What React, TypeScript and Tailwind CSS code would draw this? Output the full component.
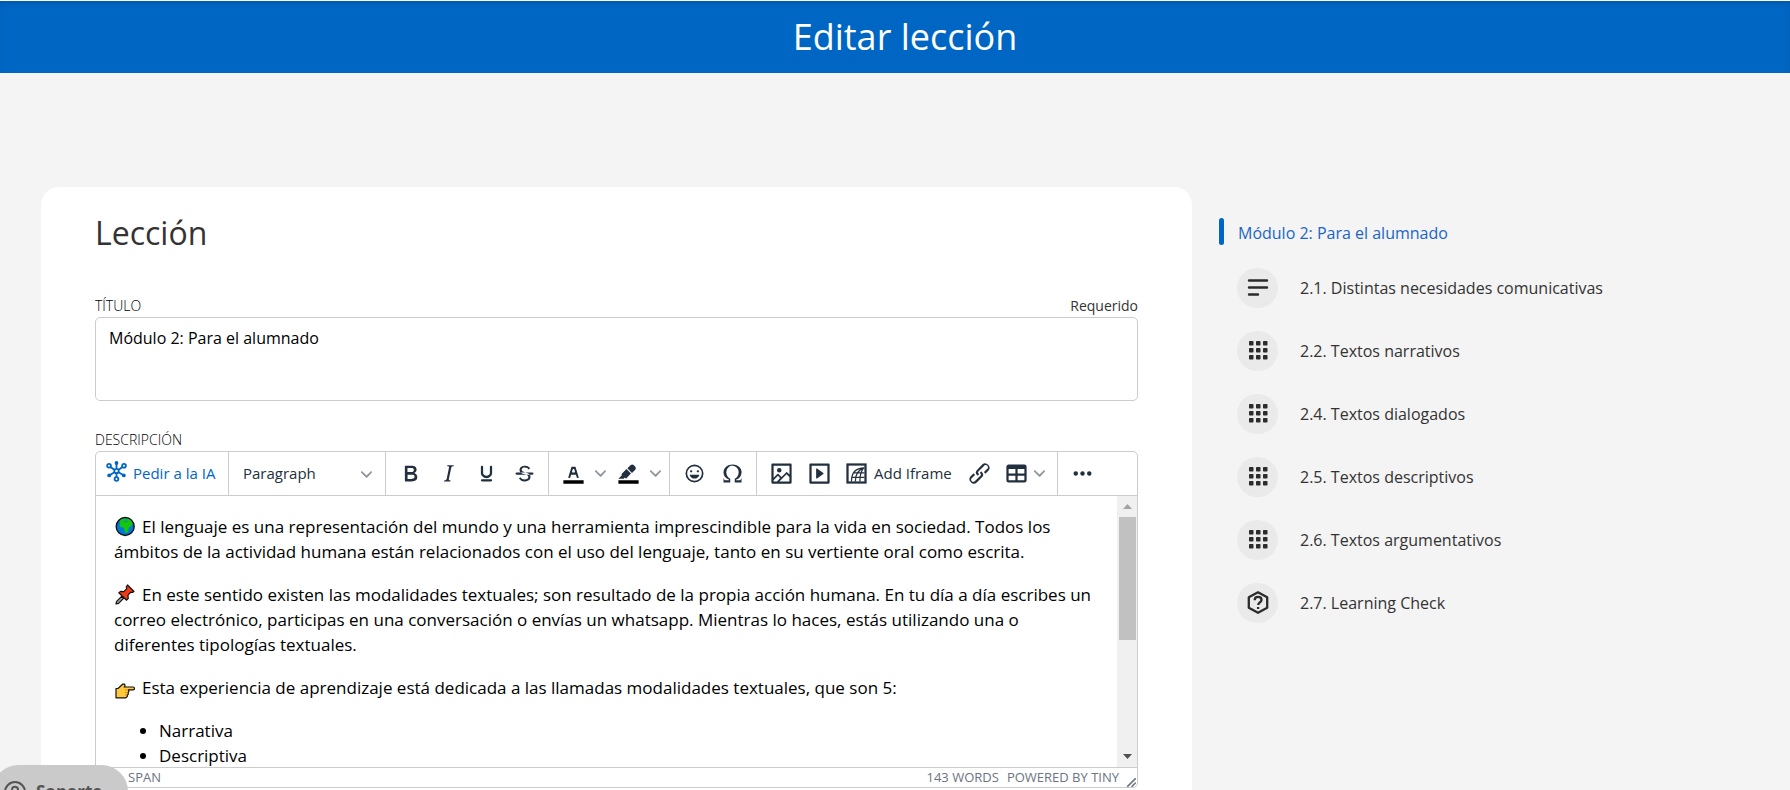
import { ReactNode, useState } from 'react'

const ICONS = {
  bold: 'M7.8 19c-.3 0-.5 0-.6-.2l-.2-.5V5.7c0-.2 0-.4.2-.5l.6-.2h5c1.5 0 2.7.3 3.5 1 .7.6 1.1 1.4 1.1 2.5a3 3 0 01-.6 1.9c-.4.6-1 1-1.6 1.2.4.1.9.3 1.3.6s.8.7 1 1.2c.4.4.5 1 .5 1.6 0 1.3-.4 2.3-1.3 3-.8.7-2.1 1-3.8 1H7.8zm5-8.3c.6 0 1.2-.1 1.6-.5.4-.3.6-.7.6-1.3 0-1.1-.8-1.7-2.3-1.7H9.3v3.5h3.4zm.5 6c.7 0 1.3-.1 1.7-.4.4-.4.6-.9.6-1.5s-.2-1-.7-1.4c-.4-.3-1-.4-2-.4H9.4v3.8h4z',
  italic: 'M16.7 4.7l-.1.9h-.3c-.6 0-1 0-1.4.3-.3.3-.4.6-.5 1.1l-2.1 9.8v.6c0 .5.4.8 1.4.8h.2l-.2.8H8l.2-.8h.2c1.1 0 1.8-.5 2-1.5l2-9.8.1-.5c0-.6-.4-.8-1.4-.8h-.3l.2-.9h5.8z',
  underline: 'M16 5c.6 0 1 .4 1 1v5.5a4 4 0 01-.4 1.8l-1 1.4a5.3 5.3 0 01-5.5 1 5 5 0 01-1.6-1c-.5-.4-.8-.9-1.1-1.4a4 4 0 01-.4-1.8V6c0-.6.4-1 1-1s1 .4 1 1v5.5c0 .3 0 .6.2 1l.6.7a3.3 3.3 0 002.2.8 3.4 3.4 0 002.2-.8c.3-.2.4-.5.6-.8l.2-.9V6c0-.6.4-1 1-1zM8 17h8c.6 0 1 .4 1 1s-.4 1-1 1H8a1 1 0 010-2z',
  strike: 'M15.6 8.5c-.5-.7-1-1.1-1.3-1.3-.6-.4-1.3-.6-2-.6-2.7 0-2.8 1.7-2.8 2.1 0 1.6 1.8 2 3.2 2.3 4.4.9 4.6 2.8 4.6 3.9 0 1.4-.7 4.1-5 4.1A6.2 6.2 0 017 16.4l1.5-1.1c.4.6 1.6 2 3.7 2 1.6 0 2.5-.4 3-1.2.4-.8.3-2-.8-2.6-.7-.4-1.6-.7-2.9-1-1-.2-3.9-.8-3.9-3.6C7.6 6 10.3 5 12.4 5c2.9 0 4.2 1.6 4.7 2.4l-1.5 1.1zM5 11h14a1 1 0 010 2H5a1 1 0 010-2z',
  textColor: 'M8.7 16h-.8a.5.5 0 01-.5-.6l2.7-9c.1-.3.3-.4.5-.4h2.8c.2 0 .4.1.5.4l2.7 9a.5.5 0 01-.5.6h-.8a.5.5 0 01-.4-.4l-.7-2.2c0-.3-.3-.4-.5-.4h-3.4c-.2 0-.4.1-.5.4l-.7 2.2c0 .3-.2.4-.4.4zm2.6-7.6l-.6 2a.5.5 0 00.5.6h1.6a.5.5 0 00.5-.6l-.6-2c0-.3-.3-.4-.5-.4h-.4c-.2 0-.4.1-.5.4z',
  highlight: 'M7.7 16.7H3l3.3-3.3-.7-.8L10.2 8l4 4.1-4 4.2c-.2.2-.6.2-.8 0l-.6-.7-1.1 1.1zm5-7.5L11 7.4l3-2.9a2 2 0 012.6 0L18 6c.7.7.7 2 0 2.7l-2.9 2.9-1.8-1.8-.5-.6',
  emoji: 'M9 11c.6 0 1-.4 1-1s-.4-1-1-1a1 1 0 00-1 1c0 .6.4 1 1 1zm6 0c.6 0 1-.4 1-1s-.4-1-1-1a1 1 0 00-1 1c0 .6.4 1 1 1zm-3 5.5c2.1 0 4-1.5 4.4-3.5H7.6c.5 2 2.3 3.5 4.4 3.5zM12 4a8 8 0 100 16 8 8 0 000-16zm0 14.5a6.5 6.5 0 110-13 6.5 6.5 0 010 13z',
  omega: 'M15 18h4l1-2v4h-6v-3.3l1.4-1a6 6 0 001.8-2.9 6.3 6.3 0 00-.1-4.1 5.8 5.8 0 00-3-3.2c-.6-.3-1.3-.5-2.1-.5a5.1 5.1 0 00-3.9 1.8 6.3 6.3 0 00-1.3 6 6.2 6.2 0 001.8 3l1.4.9V20H4v-4l1 2h4v-.5l-2-1L5.4 15A6.5 6.5 0 014 11c0-1 .2-1.9.6-2.7A7 7 0 016.3 6C7.1 5.4 8 5 9 4.5c1-.3 2-.5 3.1-.5a8.8 8.8 0 015.7 2 7 7 0 011.7 2.3 6 6 0 01.2 4.8c-.2.7-.6 1.3-1 1.9a7.6 7.6 0 01-3.6 2.5v.5z',
  image: 'M5 15.7l3.3-3.2c.3-.3.7-.3 1 0L12 15l4.1-4c.3-.4.8-.4 1 0l2 1.9V5H5v10.7zM5 18V19h3l2.8-2.9-2-2L5 17.9zm14-3l-2.5-2.4-6.4 6.5H19v-4zM4 3h16c.6 0 1 .4 1 1v16c0 .6-.4 1-1 1H4a1 1 0 01-1-1V4c0-.6.4-1 1-1zm6 8a2 2 0 100-4 2 2 0 000 4z',
  embed: 'M4 3h16c.6 0 1 .4 1 1v16c0 .6-.4 1-1 1H4a1 1 0 01-1-1V4c0-.6.4-1 1-1zm1 2v14h14V5H5zm4.8 2.6l5.6 4a.5.5 0 010 .8l-5.6 4A.5.5 0 019 16V8a.5.5 0 01.8-.4z',
  link: 'M6.2 12.3a1 1 0 011.4 1.4l-2.1 2a2 2 0 102.7 2.8l4.8-4.8a1 1 0 000-1.4 1 1 0 111.4-1.3 2.9 2.9 0 010 4L9.6 20a3.9 3.9 0 01-5.5-5.5l2-2zm11.6-.6a1 1 0 01-1.4-1.4l2-2a2 2 0 10-2.6-2.8L11 10.3a1 1 0 000 1.4A1 1 0 119.6 13a2.9 2.9 0 010-4L14.4 4a3.9 3.9 0 015.5 5.5l-2 2z',
  table: 'M19 4a2 2 0 012 2v12a2 2 0 01-2 2H5a2 2 0 01-2-2V6c0-1.1.9-2 2-2h14zM5 14v4h6v-4H5zm14 0h-6v4h6v-4zm0-6h-6v4h6V8zM5 12h6V8H5v4z',
  more: 'M6 10a2 2 0 00-2 2c0 1.1.9 2 2 2a2 2 0 002-2 2 2 0 00-2-2zm12 0a2 2 0 00-2 2c0 1.1.9 2 2 2a2 2 0 002-2 2 2 0 00-2-2zm-6 0a2 2 0 00-2 2c0 1.1.9 2 2 2a2 2 0 002-2 2 2 0 00-2-2z'
}

type IconName = keyof typeof ICONS

function Icon({ name, bar = false }: { name: IconName; bar?: boolean }) {
  return (
    <svg className="size-[27px] shrink-0" viewBox="0 0 24 24" fill="currentColor" fillRule="evenodd">
      <path d={ICONS[name]} />
      {bar && <path d="M3 18h18v3H3z" fill="#000" />}
    </svg>
  )
}

function Chevron({ className = '' }: { className?: string }) {
  return (
    <svg className={`size-[11px] shrink-0 text-[#8d949d] ${className}`} viewBox="0 0 10 10" fill="currentColor">
      <path d="M8.7 2.2c.3-.3.8-.3 1 0 .4.4.4.9 0 1.2L5.7 7.8c-.3.3-.9.3-1.2 0L.2 3.4a.8.8 0 010-1.2c.3-.3.8-.3 1.1 0L5 6l3.7-3.8z" />
    </svg>
  )
}

function AiIcon() {
  return (
    <svg className="mb-1 size-[21px] shrink-0" viewBox="0 0 21 21" fill="none" stroke="currentColor" strokeWidth="1.8">
      <path d="M10.500 7.500V3M10.500 12.500v3.500M8.300 8.800L4.600 6M12.700 8.800L16.400 6M8.500 11.300l-5 2.900M12.500 11.300l5 2.900" />
      <circle cx="10.500" cy="10" r="2.200" />
      <circle cx="10.500" cy="18" r="1.900" />
      <circle cx="3" cy="4.800" r="1.900" />
      <circle cx="18" cy="4.800" r="1.900" />
      <g fill="currentColor" stroke="none">
        <circle cx="10.500" cy="2" r="1.900" />
        <circle cx="3.200" cy="14.400" r="1.900" />
        <circle cx="17.800" cy="14.400" r="1.900" />
      </g>
    </svg>
  )
}

function IframeIcon() {
  return (
    <svg className="size-[27px] shrink-0" viewBox="0 0 24 24" fill="none" stroke="currentColor">
      <rect x="4" y="4" width="16" height="16" strokeWidth="2" />
      <path d="M7.500 19C7.500 12 11 7 19 7M11 19C11 13 13.500 8.500 19 7M15 19C15 14 15.500 10 18.500 7M9.500 11.500H19M8 15.500h11" strokeWidth="1.100" />
    </svg>
  )
}

function ToolButton({ name, label }: { name: IconName; label: string }) {
  return (
    <button type="button" aria-label={label} className="flex h-9 w-[38px] items-center justify-center">
      <Icon name={name} />
    </button>
  )
}

function SplitButton({ name, label }: { name: IconName; label: string }) {
  return (
    <div className="flex items-center">
      <button type="button" aria-label={label} className="flex h-9 w-[38px] items-center justify-center">
        <Icon name={name} bar />
      </button>
      <button type="button" aria-label={`${label}: opciones`} className="flex h-9 w-[17px] items-center justify-center">
        <Chevron />
      </button>
    </div>
  )
}

function ToolGroup({ children, last = false }: { children: ReactNode; last?: boolean }) {
  return (
    <div className={`flex h-[43px] items-center px-[5px] ${last ? '' : 'border-r border-[#ccc]'}`}>
      {children}
    </div>
  )
}

function Toolbar() {
  return (
    <div className="flex border-b border-[#ccc] text-[#222f3e]">
      <ToolGroup>
        <button type="button" className="flex h-9 w-[122px] items-center gap-[6px] pl-[5px] text-[15px] whitespace-nowrap text-[#0066c4]">
          <AiIcon />
          Pedir a la IA
        </button>
      </ToolGroup>
      <ToolGroup>
        <div className="relative w-[146px]">
          <select aria-label="Formato de bloque" className="h-9 w-full appearance-none bg-transparent pl-[9px] text-[15px]">
            <option>Paragraph</option>
            <option>Heading 1</option>
            <option>Heading 2</option>
          </select>
          <Chevron className="pointer-events-none absolute top-[13px] right-2" />
        </div>
      </ToolGroup>
      <ToolGroup>
        <ToolButton name="bold" label="Negrita" />
        <ToolButton name="italic" label="Cursiva" />
        <ToolButton name="underline" label="Subrayado" />
        <ToolButton name="strike" label="Tachado" />
      </ToolGroup>
      <ToolGroup>
        <SplitButton name="textColor" label="Color de texto" />
        <SplitButton name="highlight" label="Color de fondo" />
      </ToolGroup>
      <ToolGroup>
        <ToolButton name="emoji" label="Emoticonos" />
        <ToolButton name="omega" label="Carácter especial" />
      </ToolGroup>
      <ToolGroup>
        <ToolButton name="image" label="Imagen" />
        <ToolButton name="embed" label="Multimedia" />
        <button type="button" className="flex h-9 w-[122px] items-center gap-1 pl-[5px] text-[15px] whitespace-nowrap">
          <IframeIcon />
          Add Iframe
        </button>
        <ToolButton name="link" label="Enlace" />
        <button type="button" aria-label="Tabla" className="flex h-9 w-[54px] items-center gap-1 pl-[5px]">
          <Icon name="table" />
          <Chevron />
        </button>
      </ToolGroup>
      <ToolGroup last>
        <ToolButton name="more" label="Más" />
      </ToolGroup>
    </div>
  )
}

function Globe() {
  return (
    <svg className="mr-[7px] inline-block size-[21px] align-[-4px]" viewBox="0 0 21 21">
      <circle cx="11.200" cy="10.500" r="9" fill="#0078d7" stroke="#111" strokeWidth="1.400" />
      <path d="M5.500 5.500l1.500-2 3.500-1 4.500.6 2.600 2.400 1 2.500-1.600 2.500-2.200 1-.3 3-1.700 2.600-1.800-.6-.8-3.400-.8-1.600-2.600-.2-1.200-2.400.8-1.800z" fill="#16c60c" />
      <path d="M9.500 4.600l1.600 1.200 2.400-.6M12 3.500l1 .8" fill="none" stroke="#0078d7" strokeWidth=".8" />
    </svg>
  )
}

function Pin() {
  return (
    <svg className="mr-[7px] inline-block size-[21px] align-[-4px]" viewBox="0 0 21 21" stroke="#111" strokeWidth="1.200" strokeLinejoin="round">
      <path d="M2 20l.6-2.600 5-5 2 2-5 5z" fill="#9b9b9b" />
      <path d="M13.500 1l6.500 6.500-1.600 1-1.600-.4-2.800 3 .2 3.400-1.600 1.700L4.800 8.800l1.800-1.400 3.200.2 3-3-.5-1.800z" fill="#f03a17" />
    </svg>
  )
}

function Hand() {
  return (
    <svg className="mr-[7px] inline-block size-[21px] align-[-6px]" viewBox="0 0 21 21">
      <path d="M2 9.500h2L8.800 5l1.900.2.300 1.800-.8 1h9c1.600 0 1.700 2.900 0 2.900h-4.700l.4 1.600-.8 1.200.2 1.500-1 1.200v1.200l-1.500 1.200H2z" fill="#ffc83d" stroke="#111" strokeWidth="1.200" strokeLinejoin="round" />
      <path d="M11 11h3M11 13.500h2.500M11 16h2" fill="none" stroke="#d67d00" strokeWidth=".7" />
    </svg>
  )
}

function Editor() {
  return (
    <div className="overflow-hidden rounded-[5px] border border-[#ccc]">
      <Toolbar />
      <div className="flex h-[271px]">
        <div
          role="textbox"
          aria-multiline="true"
          aria-labelledby="descripcion-label"
          contentEditable
          suppressContentEditableWarning
          className="min-w-0 flex-1 overflow-hidden px-[18px] pt-[18px] text-[17px] leading-[25px] text-black outline-none"
        >
          <p className="mb-[18px]">
            <Globe />
            El lenguaje es una representación del mundo y una herramienta imprescindible para la vida en sociedad. Todos los ámbitos de la actividad humana están relacionados con el uso del lenguaje, tanto en su vertiente oral como escrita.
          </p>
          <p className="mb-[18px]">
            <Pin />
            En este sentido existen las modalidades textuales; son resultado de la propia acción humana. En tu día a día escribes un correo electrónico, participas en una conversación o envías un whatsapp. Mientras lo haces, estás utilizando una o diferentes tipologías textuales.
          </p>
          <p className="mb-[18px]">
            <Hand />
            Esta experiencia de aprendizaje está dedicada a las llamadas modalidades textuales, que son 5:
          </p>
          <ul className="list-disc pl-[45px]">
            <li>Narrativa</li>
            <li>Descriptiva</li>
          </ul>
        </div>
        <div className="flex w-5 flex-col items-center bg-[#f0f0f0] py-2" aria-hidden="true">
          <svg className="h-[5px] w-[9px]" viewBox="0 0 9 5" fill="#a3a3a3">
            <path d="M4.500 0L9 5H0z" />
          </svg>
          <div className="mt-2 h-[123px] w-[17px] bg-[#c1c1c1]" />
          <svg className="mt-auto h-[5px] w-[9px]" viewBox="0 0 9 5" fill="#505050">
            <path d="M4.500 5L0 0h9z" />
          </svg>
        </div>
      </div>
      <div className="flex h-5 items-center border-t border-[#ccc] pt-px pl-8 text-[13px] text-[#6b747f]">
        <span>SPAN</span>
        <span className="mr-2 ml-auto">143 WORDS</span>
        <a href="#tiny">POWERED BY TINY</a>
        <svg className="mt-2 ml-[7px] size-[11px]" viewBox="0 0 10 10" fill="currentColor">
          <path d="M8.100 1.100A.5.500 0 119 2l-7 7A.5.500 0 111 8l7-7zM8.100 5.100A.5.500 0 119 6l-3 3A.5.500 0 115 8l3-3z" />
        </svg>
      </div>
    </div>
  )
}

function LinesIcon() {
  return (
    <svg className="size-6" viewBox="0 0 24 24" fill="none" stroke="currentColor" strokeWidth="2.400" strokeLinecap="round">
      <path d="M3 4.500h18M3 11.500h18M3 18.500h9" />
    </svg>
  )
}

function GridIcon() {
  return (
    <svg className="size-6" viewBox="0 0 24 24" fill="currentColor">
      {[3, 10, 17].map(y => [3, 10, 17].map(x => (
        <rect key={`${x}-${y}`} x={x} y={y - 1} width="4.500" height="4.500" rx=".8" />
      )))}
    </svg>
  )
}

function QuizIcon() {
  return (
    <svg className="size-6" viewBox="0 0 24 24" fill="none" stroke="currentColor" strokeWidth="2.300" strokeLinejoin="round">
      <path d="M12 1.300l9.200 5v10.500L12 21.800l-9.200-5V6.300z" />
      <path d="M8.700 9.200c0-4.500 6.800-4.200 6.800-.3 0 2.400-3.300 2.600-3.300 5.100" />
      <path d="M12.100 16v2" />
    </svg>
  )
}

const items = [
  { title: '2.1. Distintas necesidades comunicativas', icon: <LinesIcon /> },
  { title: '2.2. Textos narrativos', icon: <GridIcon /> },
  { title: '2.4. Textos dialogados', icon: <GridIcon /> },
  { title: '2.5. Textos descriptivos', icon: <GridIcon /> },
  { title: '2.6. Textos argumentativos', icon: <GridIcon /> },
  { title: '2.7. Learning Check', icon: <QuizIcon /> }
]

function Sidebar() {
  return (
    <nav className="ml-[27px] flex-1 pt-[31px] text-base text-[#333]">
      <div className="flex items-center gap-[14px]">
        <span className="h-[27px] w-[5px] rounded-sm bg-[#0066c4]" />
        <a href="#modulo-2" className="mt-[3px] text-[#1a66c4]">Módulo 2: Para el alumnado</a>
      </div>
      <ul className="mt-[23px] ml-[18px] space-y-[23px]">
        {items.map(item => (
          <li key={item.title}>
            <a href="#leccion" className="flex items-center gap-[22px]">
              <span className="flex h-10 w-[41px] items-center justify-center rounded-full bg-[#eaeaea] text-[#2b2b2b]">
                {item.icon}
              </span>
              {item.title}
            </a>
          </li>
        ))}
      </ul>
    </nav>
  )
}

export default function App() {
  const [title, setTitle] = useState('Módulo 2: Para el alumnado')

  return (
    <div className="flex min-h-screen flex-col bg-[#f4f4f4] font-['Open_Sans',sans-serif] text-[#333]">
      <header className="border-t border-white">
        <div className="flex h-[72px] items-center justify-center bg-[#0066c4] pl-5 shadow-[inset_0_4px_6px_-3px_rgba(0,0,0,0.2)]">
          <h1 className="text-4xl text-white">Editar lección</h1>
        </div>
      </header>

      <div className="flex flex-1 pt-[114px] pl-[41px]">
        <main className="w-[1151px] max-w-[66%] rounded-t-[18px] bg-white px-[54px] pt-[25px]">
          <h2 className="text-[32px] leading-[42px]">Lección</h2>

          <div className="mt-[41px] flex items-end justify-between text-sm leading-[22px]">
            <label htmlFor="titulo" className="font-light text-black">TÍTULO</label>
            <span>Requerido</span>
          </div>
          <textarea
            id="titulo"
            value={title}
            onChange={e => setTitle(e.target.value)}
            className="block h-[84px] w-full resize-none rounded-[5px] border border-[#ccc] px-[13px] py-2 text-base text-black outline-none"
          />

          <p id="descripcion-label" className="mt-[28px] text-sm leading-[22px] font-light text-black">DESCRIPCIÓN</p>
          <Editor />
        </main>
        <Sidebar />
      </div>

      {/* Support launcher, partly below the fold */}
      <button type="button" className="fixed -bottom-7 -left-2 flex h-[53px] w-[136px] items-center gap-[9px] rounded-full bg-[#cacaca] pl-[11px] text-[17px] font-bold text-[#555]">
        <svg className="size-6" viewBox="0 0 24 24" fill="none" stroke="currentColor" strokeWidth="2" strokeLinecap="round">
          <circle cx="12" cy="12" r="10" />
          <path d="M9 9.500a3 3 0 016 .5c0 2-3 2-3 4M12 17.500v.1" />
        </svg>
        Soporte
      </button>
    </div>
  )
}
